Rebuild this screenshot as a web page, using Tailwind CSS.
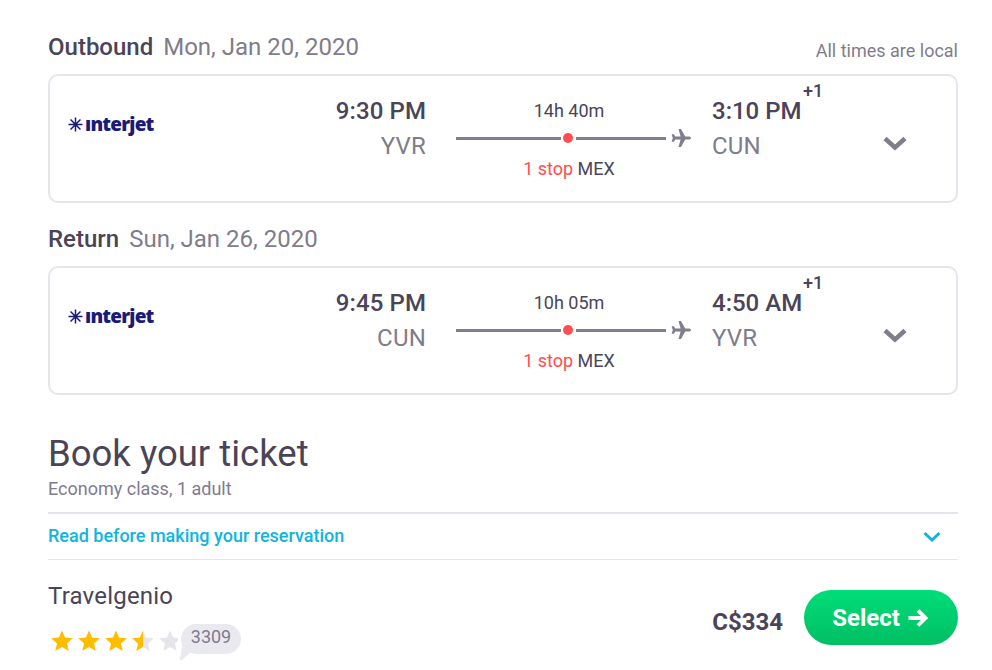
<!DOCTYPE html>
<html lang="en">
<head>
  <meta charset="UTF-8">
  <title>Flight details</title>
  <script src="https://cdn.jsdelivr.net/npm/@tailwindcss/browser@4"></script>
</head>
<body class="bg-white font-['Roboto',sans-serif] text-[#4a4458] overflow-hidden">
  <div class="w-[992px] h-[670px] overflow-hidden pl-[48px] pr-[34px] pt-[32px]">
    <!-- Outbound -->
    <div class="flex items-end justify-between h-[30px]">
      <div class="text-[24px] leading-[30px]"><span class="font-medium">Outbound</span><span class="ml-[10px] text-[#7f7c8c]">Mon, Jan 20, 2020</span></div>
      <div class="text-[18px] leading-[24px] text-[#7f7c8c] mb-[-1px]">All times are local</div>
    </div>
    <div class="mt-[12px] h-[129px] rounded-[10px] border-2 border-[#e6e5ec] flex">
      <div class="w-[124px] pl-[18px] pt-[36px] flex items-start">
        <div class="flex items-center text-[#1b1a78]">
          <svg class="w-[15px] h-[15px] mt-[1px]" viewBox="0 0 16 16" fill="none" stroke="currentColor" stroke-width="1.6"><path d="M8 0.5V15.5M0.5 8H15.5M2.7 2.7L13.3 13.3M2.7 13.3L13.3 2.7"/></svg>
          <span class="ml-[2px] text-[19px] leading-[24px] font-extrabold font-['Open_Sans',sans-serif] tracking-[-0.8px]">ınterjet</span>
        </div>
      </div>
      <div class="w-[252px] text-right pt-[20px]">
        <div class="text-[24px] leading-[30px] font-medium tracking-[0.1px]">9:30 PM</div>
        <div class="text-[24px] leading-[30px] mt-[5px] text-[#7f7c8c] tracking-[0.2px]">YVR</div>
      </div>
      <div class="ml-[30px] w-[236px] pt-[24px]">
        <div class="w-[226px] text-center text-[18px] leading-[22px]">14h 40m</div>
        <div class="mt-[6px] flex items-center h-[20px]">
          <div class="w-[105px] h-[3px] bg-[#807d8d]"></div>
          <div class="w-[10px] h-[10px] ml-[2px] rounded-full bg-[#ff4d4f]"></div>
          <div class="flex-none ml-[3px] w-[90px] h-[3px] bg-[#807d8d]"></div>
          <svg class="ml-[5px] w-[20px] h-[20px] text-[#807d8d]" viewBox="0 0 20 20" fill="currentColor"><path d="M7.5 1H10L14.2 8.4H18C19 8.4 20 9.2 20 10S19 11.6 18 11.6H14.2L10 19H7.5L9.6 11.6H4.4L2.7 13.7H0.6L1.8 10L0.6 6.3H2.7L4.4 8.4H9.6Z"/></svg>
        </div>
        <div class="w-[226px] text-center text-[18px] leading-[22px] mt-[10px]"><span class="text-[#ff4d4f]">1 stop</span> MEX</div>
      </div>
      <div class="ml-[20px] w-[162px] relative pt-[20px]">
        <div class="text-[24px] leading-[30px] font-medium">3:10 PM</div>
        <div class="absolute left-[91px] top-[4px] text-[18px] leading-[22px] font-medium">+1</div>
        <div class="text-[24px] leading-[30px] mt-[5px] text-[#7f7c8c] tracking-[0.2px]">CUN</div>
        <svg class="absolute left-[171px] top-[60px] w-[24px] h-[15px] text-[#807d8d]" viewBox="0 0 23 15" fill="none" stroke="currentColor" stroke-width="4.5"><path d="M1.5 2.5L11.5 11.5L21.5 2.5"/></svg>
      </div>
    </div>

    <!-- Return -->
    <div class="mt-[21px] h-[30px] text-[24px] leading-[30px]"><span class="font-medium">Return</span><span class="ml-[10px] text-[#7f7c8c]">Sun, Jan 26, 2020</span></div>
    <div class="mt-[12px] h-[129px] rounded-[10px] border-2 border-[#e6e5ec] flex">
      <div class="w-[124px] pl-[18px] pt-[36px] flex items-start">
        <div class="flex items-center text-[#1b1a78]">
          <svg class="w-[15px] h-[15px] mt-[1px]" viewBox="0 0 16 16" fill="none" stroke="currentColor" stroke-width="1.6"><path d="M8 0.5V15.5M0.5 8H15.5M2.7 2.7L13.3 13.3M2.7 13.3L13.3 2.7"/></svg>
          <span class="ml-[2px] text-[19px] leading-[24px] font-extrabold font-['Open_Sans',sans-serif] tracking-[-0.8px]">ınterjet</span>
        </div>
      </div>
      <div class="w-[252px] text-right pt-[20px]">
        <div class="text-[24px] leading-[30px] font-medium tracking-[0.1px]">9:45 PM</div>
        <div class="text-[24px] leading-[30px] mt-[5px] text-[#7f7c8c] tracking-[0.2px]">CUN</div>
      </div>
      <div class="ml-[30px] w-[236px] pt-[24px]">
        <div class="w-[226px] text-center text-[18px] leading-[22px]">10h 05m</div>
        <div class="mt-[6px] flex items-center h-[20px]">
          <div class="w-[105px] h-[3px] bg-[#807d8d]"></div>
          <div class="w-[10px] h-[10px] ml-[2px] rounded-full bg-[#ff4d4f]"></div>
          <div class="flex-none ml-[3px] w-[90px] h-[3px] bg-[#807d8d]"></div>
          <svg class="ml-[5px] w-[20px] h-[20px] text-[#807d8d]" viewBox="0 0 20 20" fill="currentColor"><path d="M7.5 1H10L14.2 8.4H18C19 8.4 20 9.2 20 10S19 11.6 18 11.6H14.2L10 19H7.5L9.6 11.6H4.4L2.7 13.7H0.6L1.8 10L0.6 6.3H2.7L4.4 8.4H9.6Z"/></svg>
        </div>
        <div class="w-[226px] text-center text-[18px] leading-[22px] mt-[10px]"><span class="text-[#ff4d4f]">1 stop</span> MEX</div>
      </div>
      <div class="ml-[20px] w-[162px] relative pt-[20px]">
        <div class="text-[24px] leading-[30px] font-medium">4:50 AM</div>
        <div class="absolute left-[91px] top-[4px] text-[18px] leading-[22px] font-medium">+1</div>
        <div class="text-[24px] leading-[30px] mt-[5px] text-[#7f7c8c] tracking-[0.2px]">YVR</div>
        <svg class="absolute left-[171px] top-[60px] w-[24px] h-[15px] text-[#807d8d]" viewBox="0 0 23 15" fill="none" stroke="currentColor" stroke-width="4.5"><path d="M1.5 2.5L11.5 11.5L21.5 2.5"/></svg>
      </div>
    </div>

    <!-- Book -->
    <h1 class="mt-[35px] text-[36.5px] leading-[48px]">Book your ticket</h1>
    <div class="text-[18px] leading-[24px] mt-[-1px] text-[#7f7c8c]">Economy class, 1 adult</div>
    <div class="mt-[11px] h-[48px] border-t-2 border-b border-[#e6e5ec] flex items-center justify-between">
      <span class="text-[18px] font-medium text-[#0fb5de] mt-[-2px]">Read before making your reservation</span>
      <svg class="mr-[17px] w-[18px] h-[12px] text-[#0fb5de]" viewBox="0 0 18 12" fill="none" stroke="currentColor" stroke-width="3"><path d="M1.5 2L9 9L16.5 2"/></svg>
    </div>

    <div class="flex justify-between mt-[21px]">
      <div>
        <div class="text-[24px] leading-[30px] tracking-[0.2px]">Travelgenio</div>
        <div class="flex items-center mt-[18px] relative">
          <svg class="w-[130px] h-[24px]" viewBox="0 0 130 24">
            <defs>
              <linearGradient id="half"><stop offset="50%" stop-color="#ffbd00"/><stop offset="50%" stop-color="#e6e5ec"/></linearGradient>
              <path id="star" d="M12 1.5L15.1 8.6L22.8 9.3L17 14.4L18.7 22L12 18L5.3 22L7 14.4L1.2 9.3L8.9 8.6Z"/>
            </defs>
            <use href="#star" x="2" fill="#ffbd00"/>
            <use href="#star" x="29" fill="#ffbd00"/>
            <use href="#star" x="56" fill="#ffbd00"/>
            <use href="#star" x="83" fill="url(#half)"/>
            <use href="#star" x="110" fill="#e6e5ec"/>
          </svg>
          <div class="absolute left-[133px] top-[-5px] h-[30px] w-[60px] text-center rounded-[15px] bg-[#ebe9f0] text-[18px] leading-[26px] text-[#7f7c8c]">3309
            <svg class="absolute left-[-2px] top-[22px] w-[12px] h-[15px] text-[#ebe9f0]" viewBox="0 0 12 15" fill="currentColor"><path d="M3 0H12V6L3 14C1.6 14.8 0.8 14 1 13Z"/></svg>
          </div>
        </div>
      </div>
      <div class="flex items-center h-[55px] mt-[9px]">
        <span class="text-[24px] font-bold text-[#4a4458] mt-[8px]">C$334</span>
        <button class="ml-[21px] w-[154px] h-[55px] rounded-full bg-gradient-to-b from-[#00dd7a] to-[#00bf63] text-white text-[24px] font-bold flex items-center justify-center pr-[2px]">Select
          <svg class="ml-[7px] w-[21px] h-[20px]" viewBox="0 0 20 20" fill="none" stroke="currentColor" stroke-width="3.8"><path d="M1 10H17M10.5 2.5L18 10L10.5 17.5"/></svg>
        </button>
      </div>
    </div>
  </div>
</body>
</html>
